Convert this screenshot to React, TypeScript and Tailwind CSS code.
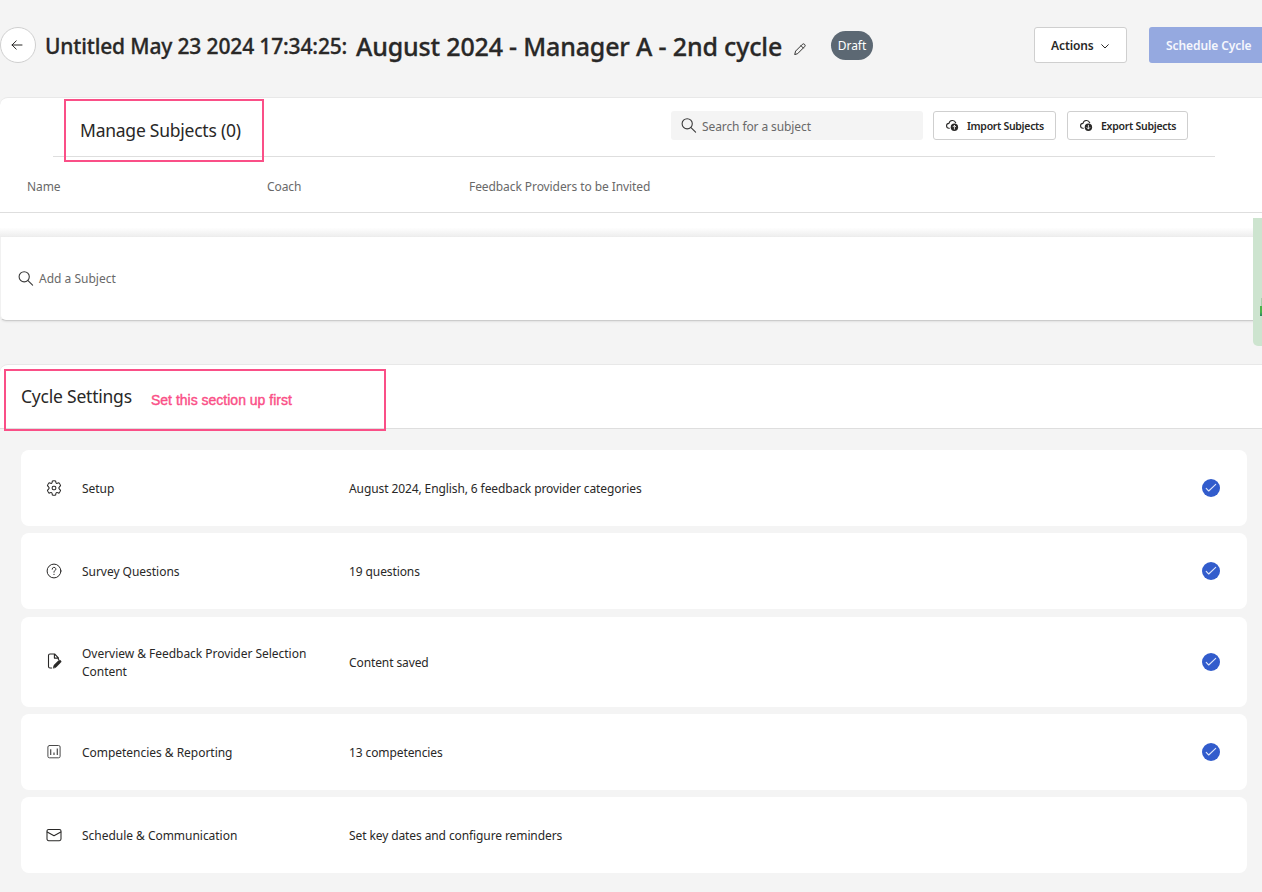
import React from "react";

const stroke = {
  fill: "none",
  stroke: "currentColor",
  strokeLinecap: "round" as const,
  strokeLinejoin: "round" as const,
};

function SearchIcon() {
  return (
    <svg width="16" height="16" viewBox="0 0 16 16" {...stroke} strokeWidth="1.1" className="shrink-0 text-[#3a3a3a]">
      <circle cx="6.2" cy="5.8" r="5.1" />
      <path d="M10 9.6l4.6 4.5" />
    </svg>
  );
}

function BackIcon() {
  return (
    <svg width="12" height="10" viewBox="0 0 12 10" {...stroke} strokeWidth="1">
      <path d="M11 5H1M5.2 .9L1 5l4.2 4.1" />
    </svg>
  );
}

function PencilIcon() {
  return (
    <svg width="12" height="12" viewBox="0 0 12 12" {...stroke} strokeWidth=".95">
      <path d="M.8 11.2l.8-3.1L8.3 1.4a1.6 1.6 0 0 1 2.3 2.3L3.9 10.4zM7 2.7L9.3 5" />
    </svg>
  );
}

function CloudIcon({ down = false }: { down?: boolean }) {
  return (
    <svg width="13" height="13" viewBox="0 0 13 13" {...stroke} strokeWidth="1.1" className="shrink-0">
      <path d="M3.3 9.3H3A2.4 2.4 0 0 1 3 4.4 3.5 3.5 0 0 1 9.7 3.7" />
      <circle cx="8.4" cy="8.2" r="3.7" fill="currentColor" stroke="none" />
      <path
        d={down ? "M8.4 6.3v3.6M7 8.6l1.4 1.4 1.4-1.4" : "M8.4 10.1V6.5M7 7.8l1.4-1.4 1.4 1.4"}
        stroke="#fff"
        strokeWidth=".85"
      />
    </svg>
  );
}

function GearIcon() {
  return (
    <svg width="16" height="16" viewBox="0 0 16 16" {...stroke} strokeWidth="1.05">
      <path d="M6.4.9a7 7 0 0 1 3.2 0l.35 1.7a1 1 0 0 0 1.35.75l1.65-.6a7 7 0 0 1 1.6 2.8l-1.3 1.6a1.2 1.2 0 0 0 0 1.7l1.3 1.5a7 7 0 0 1-1.6 2.8l-1.65-.55a1 1 0 0 0-1.35.75l-.35 1.75a7 7 0 0 1-3.2 0l-.35-1.75a1 1 0 0 0-1.35-.75l-1.65.55a7 7 0 0 1-1.6-2.8l1.3-1.5a1.2 1.2 0 0 0 0-1.7l-1.3-1.6a7 7 0 0 1 1.6-2.8l1.65.6a1 1 0 0 0 1.35-.75z" />
      <rect x="6.2" y="6.2" width="3.6" height="3.6" rx="1.3" />
    </svg>
  );
}

function QuestionIcon() {
  return (
    <svg width="16" height="16" viewBox="0 0 16 16" {...stroke} strokeWidth="1">
      <circle cx="8" cy="8" r="6.9" />
      <path d="M6.2 6.2a1.8 1.8 0 1 1 2.7 1.5c-.6.4-.9.7-.9 1.5" />
      <circle cx="8" cy="11.3" r=".65" fill="currentColor" stroke="none" />
    </svg>
  );
}

function DocEditIcon() {
  return (
    <svg width="16" height="16" viewBox="0 0 16 16" {...stroke} strokeWidth="1.1" className="-mt-[2px]">
      <path d="M5.6 15H4a1.5 1.5 0 0 1-1.5-1.5v-11A1.5 1.5 0 0 1 4 1h4.6l3.8 3.9v1.5M8.4 1.2v3.9h3.9" />
      <path d="M7.4 14.8l.6-2.6 4.7-4.6a1.3 1.3 0 0 1 1.9 1.9l-4.6 4.7z" fill="currentColor" strokeWidth=".7" />
    </svg>
  );
}

function ChartIcon() {
  return (
    <svg width="16" height="16" viewBox="0 0 16 16" {...stroke} strokeWidth="1" className="text-[#4a4a4a]">
      <rect x="1.9" y="1.5" width="12.2" height="12.3" rx="1.5" />
      <path d="M4.7 5.2v5.9M8 8.6v2.5M11.3 4.4v6.7" strokeWidth="1.2" strokeLinecap="butt" />
    </svg>
  );
}

function MailIcon() {
  return (
    <svg width="16" height="16" viewBox="0 0 16 16" {...stroke} strokeWidth="1.05">
      <rect x="1" y="2.5" width="14" height="11.2" rx="1.6" />
      <path d="M1.2 5L8 8.7 14.8 5" />
    </svg>
  );
}

function CheckBadge() {
  return (
    <span className="flex size-[18px] items-center justify-center rounded-full bg-[#325ccc] text-[#dfe6fa]">
      <svg width="12" height="10" viewBox="0 0 12 10" {...stroke} strokeWidth="1.1">
        <path d="M1.2 5.4l2.5 2.6 7-6.6" />
      </svg>
    </span>
  );
}

const rows = [
  { icon: <GearIcon />, title: "Setup", detail: "August 2024, English, 6 feedback provider categories", done: true, box: "h-[76px] mb-[7px]" },
  { icon: <QuestionIcon />, title: "Survey Questions", detail: "19 questions", done: true, box: "h-[76px] mb-2" },
  { icon: <DocEditIcon />, title: "Overview & Feedback Provider Selection Content", detail: "Content saved", done: true, box: "h-[90px] mb-[7px]" },
  { icon: <ChartIcon />, title: "Competencies & Reporting", detail: "13 competencies", done: true, box: "h-[76px] mb-[7px]" },
  { icon: <MailIcon />, title: "Schedule & Communication", detail: "Set key dates and configure reminders", done: false, box: "h-[76px]" },
];

export default function App() {
  return (
    <div className="relative h-[892px] w-[1262px] overflow-hidden bg-[#f4f4f4] font-['Noto_Sans',sans-serif] text-[12px] text-[#292827]">
      <header className="flex h-[97px] pt-[27px]">
        <button className="flex size-9 shrink-0 items-center justify-center rounded-full border border-[#d0d0d0] bg-white pr-[3px]">
          <BackIcon />
        </button>
        <h1 className="ml-[9px] flex h-9 w-[737px] shrink-0 items-center pt-[3px] font-medium whitespace-nowrap [-webkit-text-stroke:0.3px_#292827]">
          <span className="w-[311px] shrink-0 text-[21px] tracking-[-0.15px]">Untitled May 23 2024 17:34:25:</span>
          <span className="text-[25px] tracking-[-0.17px]">August 2024 - Manager A - 2nd cycle</span>
        </h1>
        <button className="mt-4 ml-[12px] size-3 shrink-0">
          <PencilIcon />
        </button>
        <span className="mt-1 ml-[25px] flex h-[29px] w-[42px] shrink-0 items-center justify-center rounded-full bg-[#5c6873] text-[12px] text-white">
          Draft
        </span>
        <button className="ml-[161px] flex h-9 w-[93px] shrink-0 items-center rounded-[3px] border border-[#cfcfcf] bg-white pl-4 text-[12px] font-semibold">
          <span className="pt-0.5 tracking-[-0.1px]">Actions</span>
          <svg width="8" height="5" viewBox="0 0 8 5" {...stroke} className="mt-0.5 ml-[7px]">
            <path d="M.7 .7L4 4 7.3 .7" />
          </svg>
        </button>
        <button className="ml-[22px] flex h-9 w-[130px] shrink-0 items-center rounded-[3px] bg-[#95a9e0] pt-0.5 pl-[17px] text-[12px] font-semibold tracking-[-0.08px] whitespace-nowrap text-[#f5f7fd]">
          Schedule Cycle
        </button>
      </header>

      <section className="h-[224px] rounded-l-lg border-t border-[#e8e8e8] bg-white">
        <div className="mr-[47px] ml-[53px] flex h-[59px] border-b border-[#dedede]">
          <h2 className="ml-[27px] w-[591px] pt-[20px] text-[17.5px] leading-6 tracking-[-0.24px]">Manage Subjects (0)</h2>
          <label className="mt-[13px] flex h-[29px] w-[252px] items-center rounded-[3px] bg-[#f4f4f4] pl-[10px] text-[12px] tracking-[-0.1px] text-[#696969]">
            <SearchIcon />
            <span className="ml-[5px] pt-0.5">Search for a subject</span>
          </label>
          <button className="mt-[13px] ml-[10px] flex h-[29px] w-[123px] items-center rounded-[3px] border border-[#cfcfcf] pl-3 text-[10.5px] font-semibold tracking-[-0.3px] whitespace-nowrap">
            <CloudIcon />
            <span className="ml-2 pt-0.5">Import Subjects</span>
          </button>
          <button className="mt-[13px] ml-[11px] flex h-[29px] w-[121px] items-center rounded-[3px] border border-[#cfcfcf] pl-3 text-[10.5px] font-semibold tracking-[-0.27px] whitespace-nowrap">
            <CloudIcon down />
            <span className="ml-2 pt-0.5">Export Subjects</span>
          </button>
        </div>
        <div className="flex h-[56px] items-center border-b border-[#dedede] pt-1 pl-[27px] text-[12px] tracking-[-0.08px] text-[#696969]">
          <span className="w-[240px]">Name</span>
          <span className="w-[202px]">Coach</span>
          <span>Feedback Providers to be Invited</span>
        </div>
        <div className="h-6 bg-gradient-to-b from-white from-60% to-[#ededed]" />
        <div className="flex h-[84px] items-center rounded-bl-md border-b border-l border-b-[#cccccc] border-l-[#f1f1f1] bg-white pl-[17px] text-[#696969] shadow-[0_1px_2px_rgba(0,0,0,0.08)]">
          <SearchIcon />
          <span className="ml-[5px]">Add a Subject</span>
        </div>
      </section>

      <section className="mt-[43px]">
        <div className="flex h-[65px] rounded-tl-lg border-y border-t-[#e8e8e8] border-b-[#dedede] bg-white pl-[21px]">
          <h2 className="w-[130px] pt-[19px] text-[17.5px] leading-6 tracking-[-0.22px]">Cycle Settings</h2>
          <p className="pt-[25px] font-['Liberation_Sans',sans-serif] text-[14px] leading-5 text-[#fa4f87] [-webkit-text-stroke:0.4px_#fa4f87]">
            Set this section up first
          </p>
        </div>
        <ul className="mt-[21px] mr-[15px] ml-[21px]">
          {rows.map((row) => (
            <li key={row.title} className={`flex items-center rounded-lg bg-white pr-[27px] pl-[25px] ${row.box}`}>
              <span className="w-9">{row.icon}</span>
              <span className="w-[267px] pt-0.5 pr-[30px] leading-[18px] tracking-[-0.03px]">{row.title}</span>
              <span className="flex-1 pt-0.5 tracking-[-0.1px]">{row.detail}</span>
              {row.done && <CheckBadge />}
            </li>
          ))}
        </ul>
      </section>

      <div className="absolute top-[99px] left-[64px] h-[63px] w-[200px] border-2 border-[#fa4f87]" />
      <div className="absolute top-[369px] left-[4px] h-[62px] w-[382px] border-2 border-[#fa4f87]" />
      <aside className="absolute top-[218px] right-0 h-[128px] w-[9px] rounded-bl-[5px] bg-[#cde4cf]">
        <span className="absolute top-[80px] right-0 h-2 w-[1px] bg-[#a9cfae]" />
        <span className="absolute top-[88px] right-0 h-[10px] w-[2px] bg-gradient-to-b from-[#4bb44b] from-60% to-[#2f8060]" />
      </aside>
    </div>
  );
}
